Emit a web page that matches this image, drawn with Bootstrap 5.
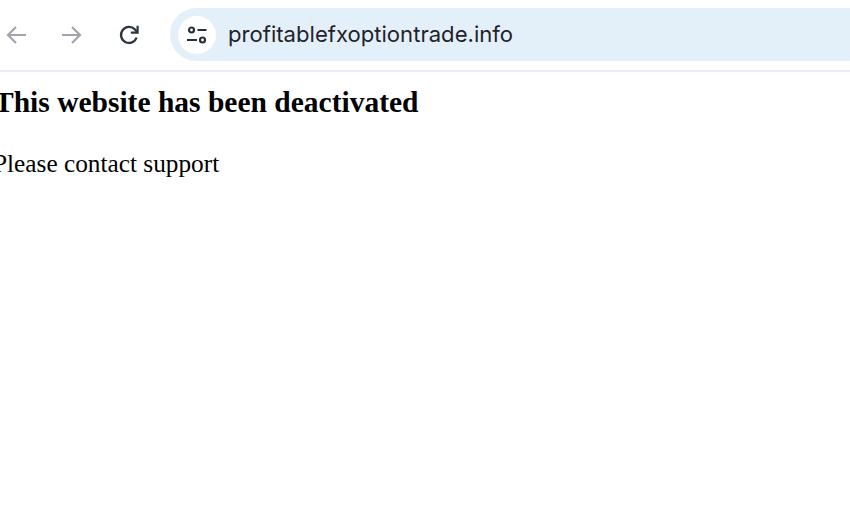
<!DOCTYPE html>
<html lang="en">
<head>
<meta charset="utf-8">
<title>This website has been deactivated</title>
<link href="https://cdn.jsdelivr.net/npm/bootstrap@5.3.0/dist/css/bootstrap.min.css" rel="stylesheet">
<style>
html, body { height: 100%; overflow: hidden; background: #fff; }
.chrome-bar { height: 72px; padding: 8px 0 10px 0; border-bottom: 2px solid #e8edf6; box-sizing: border-box; }
.nav-slot { width: 32px; height: 32px; flex: none; margin-top: 1px; }
.fwd-slot { margin-left: 24px; }
.reload-slot { margin-left: 25px; }
.omni { margin-left: 25px; height: 53px; flex: 1 1 auto; background: #e4f0f9; border-radius: 27px 0 0 27px; padding-left: 8px; }
.omni-icon { width: 38px; height: 38px; flex: none; background: #fff; border-radius: 50%; margin-top: 1px; }
.omni-url { margin-left: 12px; padding-top: 1px; font-family: Inter, "Liberation Sans", sans-serif; font-size: 22.1px; color: #1f2329; white-space: nowrap; }
.page-body { font-family: "Liberation Serif", serif; color: #000; }
.page-title { font-family: inherit; font-weight: 700; font-size: 29.5px; line-height: 32px; margin: 14px 0 0 -6px; }
.page-text { font-size: 25.3px; line-height: 28px; margin: 31px 0 0 -7px; }
</style>
</head>
<body>
<div class="chrome-bar d-flex align-items-center">
  <div class="nav-slot d-flex align-items-center justify-content-center">
    <svg width="24" height="24" viewBox="0 0 24 24" fill="none" stroke="#a1a5ab" stroke-width="2.2" aria-hidden="true"><path d="M22 12H4M12 4l-8 8 8 8"/></svg>
  </div>
  <div class="nav-slot fwd-slot d-flex align-items-center justify-content-center">
    <svg width="24" height="24" viewBox="0 0 24 24" fill="none" stroke="#a1a5ab" stroke-width="2.2" aria-hidden="true"><path d="M2 12h18M12 4l8 8-8 8"/></svg>
  </div>
  <div class="nav-slot reload-slot d-flex align-items-center justify-content-center">
    <svg width="24" height="24" viewBox="0 0 24 24" fill="none" stroke="#2f3540" stroke-width="2.3" aria-hidden="true"><path d="M19.6 14.5A8 8 0 1 1 18 6.6L20 9"/><path d="M20.6 2.8V9.6h-6.8" stroke-width="2.2"/></svg>
  </div>
  <div class="omni d-flex align-items-center">
    <div class="omni-icon d-flex align-items-center justify-content-center">
      <svg width="24" height="24" viewBox="0 0 24 24" fill="none" stroke="#2a2f36" stroke-width="2.2" aria-hidden="true"><circle cx="6.5" cy="7" r="2.5"/><path d="M12.5 7h9M2 17h10"/><circle cx="17.5" cy="17" r="2.5"/></svg>
    </div>
    <div class="omni-url">profitablefxoptiontrade.info</div>
  </div>
</div>
<div class="page-body">
  <h1 class="page-title">This website has been deactivated</h1>
  <p class="page-text">Please contact support</p>
</div>
</body>
</html>
